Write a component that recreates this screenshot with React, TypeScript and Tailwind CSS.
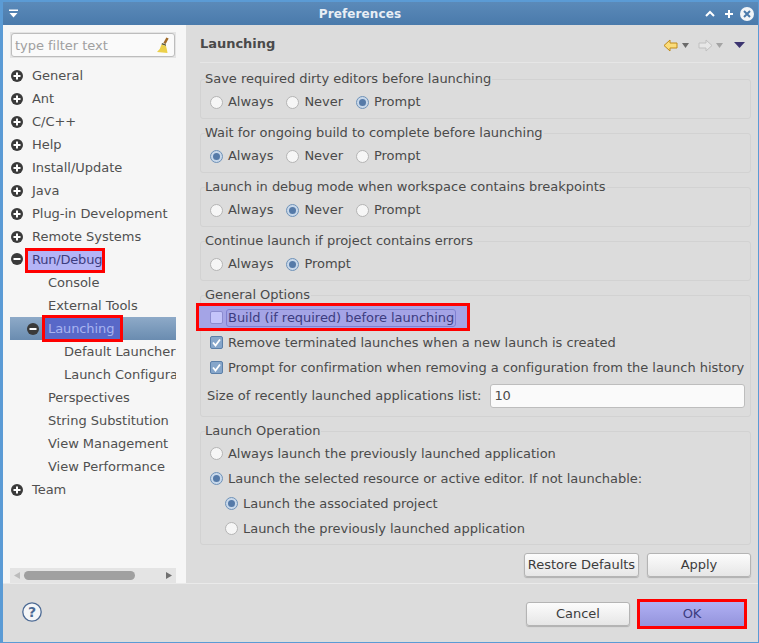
import React from 'react';

const font = { fontFamily: '"DejaVu Sans", sans-serif' };

const TreeIcon = ({ open, className }: { open?: boolean; className?: string }) => (
  <svg width="12" height="12" viewBox="0 0 12 12" className={`shrink-0 ${className ?? ''}`}>
    <circle cx="6" cy="6" r="6" fill="#3a3a3a" />
    <rect x="2.5" y="5" width="7" height="2" fill="#fff" />
    {!open && <rect x="5" y="2.5" width="2" height="7" fill="#fff" />}
  </svg>
);

const Radio = ({ checked, label }: { checked?: boolean; label: string }) => (
  <div className="flex items-center gap-[5px]">
    <span className={`w-[13px] h-[13px] rounded-full border flex items-center justify-center shrink-0 ${checked ? 'border-[#6f92b8] bg-[#c8d8ea]' : 'border-[#b4b4b4] bg-[#f6f6f6]'}`}>
      {checked && <span className="w-[7px] h-[7px] rounded-full bg-[#557aa8]" />}
    </span>
    <span>{label}</span>
  </div>
);

const Check = () => (
  <span className="w-[13px] h-[13px] rounded-[2px] border border-[#5b7fa8] bg-[#86a6ca] flex items-center justify-center shrink-0">
    <svg width="11" height="11" viewBox="0 0 11 11">
      <path d="M2 5.5 L4.5 8.5 L9 2.5" fill="none" stroke="#fff" strokeWidth="1.8" />
    </svg>
  </span>
);

const Group = ({ title, className, children }: { title: string; className: string; children: React.ReactNode }) => (
  <div className={`border border-[#d2d2d2] rounded-[3px] ${className}`}>
    <div className="h-[16px] -mt-[9px] ml-[4px] leading-[16px] text-[#4a4a4a]"><span className="bg-[#dcdcdc] pr-[1px]">{title}</span></div>
    {children}
  </div>
);

const RadioGroup = ({ title, mt, options }: { title: string; mt: string; options: [string, boolean?][] }) => (
  <Group title={title} className={`h-[40px] ${mt}`}>
    <div className="flex gap-[13px] pl-[9px] mt-[5px] h-[20px] items-center">
      {options.map(([l, c]) => <Radio key={l} label={l} checked={c} />)}
    </div>
  </Group>
);

const Btn = ({ label, className }: { label: string; className: string }) => (
  <button className={`h-[24px] rounded-[3px] border border-[#b4b4b4] bg-gradient-to-b from-[#fcfcfc] to-[#e6e6e6] text-[#3c3c3c] shadow-[0_1px_1px_rgba(0,0,0,0.2)] ${className}`}>{label}</button>
);

const topItems = ['General', 'Ant', 'C/C++', 'Help', 'Install/Update', 'Java', 'Plug-in Development', 'Remote Systems'];

const Row = ({ label, pad }: { label: string; pad: string }) => (
  <div className={`h-[23px] flex items-center whitespace-nowrap overflow-hidden ${pad}`}>{label}</div>
);

export default function App() {
  return (
    <div style={font} className="w-[759px] h-[643px] flex flex-col border-l-[3px] border-r border-b border-t-[2px] border-[#5b9bd5] bg-[#dcdcdc] text-[13px] tracking-[-0.03px] text-[#4a4a4a] overflow-hidden">
      {/* title bar */}
      <div className="h-[23px] shrink-0 bg-gradient-to-b from-[#5b8ab9] to-[#4a7aab] flex items-center justify-between pl-[5px] pr-[4px] text-white">
        <svg width="12" height="12" viewBox="0 0 12 12"><path d="M1 1.5 H10 V3 H1 Z M1.5 5 H9.5 L5.5 9.5 Z" fill="#fff" /></svg>
        <span className="font-bold text-[12px] text-[#e8eef5] tracking-[0.1px] mt-[1px] -ml-[5px]">Preferences</span>
        <div className="flex items-center">
          <svg width="10" height="10" viewBox="0 0 10 10" className="mr-[9px]"><path d="M1 7 L5 3 L9 7" fill="none" stroke="#fff" strokeWidth="2" /></svg>
          <svg width="10" height="10" viewBox="0 0 10 10" className="mr-[6px]"><path d="M5 1 V9 M1 5 H9" fill="none" stroke="#fff" strokeWidth="2" /></svg>
          <svg width="14" height="14" viewBox="0 0 14 14"><circle cx="7" cy="7" r="7" fill="#f2f5f8" /><path d="M4 4 L10 10 M10 4 L4 10" stroke="#4a7aab" strokeWidth="2" /></svg>
        </div>
      </div>

      <div className="flex h-[558px] shrink-0">
        {/* left tree */}
        <div className="w-[183px] shrink-0 bg-[#f6f6f6] flex flex-col pl-[7px] pr-[10px] pt-[7px]">
          <div className="h-[26px] shrink-0 bg-[#e4e4e4] p-[1px]">
            <div className="h-full bg-[#fafafa] border border-[#bdbdbd] rounded-[3px] flex items-center justify-between pl-[3px] pr-[4px] pt-[1px] text-[#a0a0a0]">
              <span>type filter text</span>
              <svg width="14" height="17" viewBox="0 0 14 17">
                <path d="M11.5 1 L8.5 6.5" stroke="#a06a28" strokeWidth="2.6" fill="none" />
                <path d="M6 6 L10 7.5 L10 9 L5.5 7.5 Z" fill="#5a5a40" />
                <path d="M5.5 7.5 L10 9 Q11 12.5 11.5 16 L1 15 Q4.5 12 5.5 7.5 Z" fill="#ecd04a" />
              </svg>
            </div>
          </div>
          <div className="flex-1 mt-[6px] text-[#505050] overflow-hidden">
            {topItems.map(label => (
              <div key={label} className="h-[23px] flex items-center gap-[9px] pl-[1px]"><TreeIcon /><span>{label}</span></div>
            ))}
            <div className="h-[23px] flex items-start pl-[1px]">
              <TreeIcon open className="mt-[5px]" />
              <span className="ml-[2px] h-[25px] w-[80px] shrink-0 pl-[4px] pb-[1px] flex items-center bg-[#b4b4f6] border-[3px] border-[#f00] text-[#3c3c80] tracking-[-0.2px] whitespace-nowrap">Run/Debug</span>
            </div>
            <Row label="Console" pad="pl-[38px]" />
            <Row label="External Tools" pad="pl-[38px]" />
            <div className="h-[23px] flex items-center pl-[17px] bg-gradient-to-b from-[#8eaac8] to-[#6a8cb0]">
              <TreeIcon open />
              <span className="ml-[3px] h-[27px] w-[81px] shrink-0 pl-[3px] flex items-center bg-[#5868c8] border-[3px] border-[#f00] text-[#a8b4f0] tracking-[-0.1px]">Launching</span>
            </div>
            <Row label="Default Launchers" pad="pl-[54px]" />
            <Row label="Launch Configurations" pad="pl-[54px]" />
            <Row label="Perspectives" pad="pl-[38px]" />
            <Row label="String Substitution" pad="pl-[38px]" />
            <Row label="View Management" pad="pl-[38px]" />
            <Row label="View Performance" pad="pl-[38px]" />
            <div className="h-[23px] flex items-center gap-[9px] pl-[1px]"><TreeIcon /><span>Team</span></div>
          </div>
          <div className="h-[15px] shrink-0 bg-[#e4e4e4] flex items-center justify-between px-[4px]">
            <svg width="6" height="7" viewBox="0 0 6 7"><path d="M6 0 V7 L0 3.5 Z" fill="#bcbcbc" /></svg>
            <div className="w-[111px] h-[9px] rounded-full bg-[#a0a0a0] -ml-[28px]" />
            <svg width="6" height="7" viewBox="0 0 6 7"><path d="M0 0 V7 L6 3.5 Z" fill="#707070" /></svg>
          </div>
        </div>

        {/* right page */}
        <div className="flex-1 pl-[14px] pr-[7px] flex flex-col">
          <div className="h-[38px] shrink-0 flex items-center justify-between border-b border-[#e6e6e6]">
            <span className="font-bold text-[#4a4a4a]">Launching</span>
            <div className="flex items-center mr-[6px] mt-[3px]">
              <svg width="16" height="13" viewBox="0 0 16 13"><path d="M7 1 L1 6.5 L7 12 V9 H14 V4 H7 Z" fill="#fbdc7a" stroke="#c08a18" /></svg>
              <svg width="9" height="6" viewBox="0 0 9 6" className="ml-[2px] mt-[2px]"><path d="M1 0 H8 L4.5 5 Z" fill="#6a6a6a" /></svg>
              <svg width="16" height="13" viewBox="0 0 16 13" className="ml-[7px]"><path d="M9 1 L15 6.5 L9 12 V9 H2 V4 H9 Z" fill="#e6e6e6" stroke="#c0c0c0" /></svg>
              <svg width="9" height="6" viewBox="0 0 9 6" className="ml-[2px] mt-[2px]"><path d="M1 0 H8 L4.5 5 Z" fill="#a4a4a4" /></svg>
              <svg width="11" height="6" viewBox="0 0 11 6" className="ml-[10px]"><path d="M0 0 H11 L5.5 6 Z" fill="#3c3570" /></svg>
            </div>
          </div>

          <RadioGroup title="Save required dirty editors before launching" mt="mt-[16px]" options={[['Always'], ['Never'], ['Prompt', true]]} />
          <RadioGroup title="Wait for ongoing build to complete before launching" mt="mt-[14px]" options={[['Always', true], ['Never'], ['Prompt']]} />
          <RadioGroup title="Launch in debug mode when workspace contains breakpoints" mt="mt-[14px]" options={[['Always'], ['Never', true], ['Prompt']]} />
          <RadioGroup title="Continue launch if project contains errors" mt="mt-[14px]" options={[['Always'], ['Prompt', true]]} />

          <Group title="General Options" className="h-[122px] mt-[14px]">
            <div className="-ml-[5px] w-[274px] h-[28px] border-[3px] border-[#f00] bg-[#a4a4e6] flex items-center pl-[11px] text-[#3c3c80]">
              <span className="w-[13px] h-[13px] rounded-[2px] border border-[#8c8cd0] bg-[#c4c4fa] shrink-0" />
              <span className="ml-[3px] mt-[1px] h-[18px] px-[1px] flex items-center border border-[#8080d0] rounded-[3px] whitespace-nowrap">Build (if required) before launching</span>
            </div>
            <div className="flex items-center gap-[5px] pl-[9px] mt-[3px] h-[17px]"><Check /><span>Remove terminated launches when a new launch is created</span></div>
            <div className="flex items-center gap-[5px] pl-[9px] mt-[8px] h-[17px] whitespace-nowrap"><Check /><span>Prompt for confirmation when removing a configuration from the launch history</span></div>
            <div className="flex items-center pl-[6px] pr-[5px] mt-[8px] h-[24px]">
              <span className="whitespace-nowrap tracking-normal">Size of recently launched applications list:</span>
              <div className="ml-[9px] flex-1 h-[24px] bg-[#fafafa] border border-[#bdbdbd] rounded-[3px] pl-[3px] flex items-center">10</div>
            </div>
          </Group>

          <Group title="Launch Operation" className="h-[114px] mt-[14px]">
            <div className="pl-[9px] mt-[2px] h-[25px] flex items-center"><Radio label="Always launch the previously launched application" /></div>
            <div className="pl-[9px] h-[25px] flex items-center"><Radio checked label="Launch the selected resource or active editor. If not launchable:" /></div>
            <div className="pl-[24px] h-[25px] flex items-center"><Radio checked label="Launch the associated project" /></div>
            <div className="pl-[24px] h-[25px] flex items-center"><Radio label="Launch the previously launched application" /></div>
          </Group>

          <div className="flex justify-end gap-[8px] mt-[8px]">
            <Btn label="Restore Defaults" className="w-[115px]" />
            <Btn label="Apply" className="w-[104px]" />
          </div>
        </div>
      </div>

      {/* footer */}
      <div className="flex-1 border-t border-[#eaeaea] flex items-center justify-between pl-[19px] pr-[11px]">
        <svg width="20" height="20" viewBox="0 0 20 20" className="-mt-[2px]">
          <circle cx="10" cy="10" r="9.2" fill="#f4f6f8" stroke="#4c6a94" strokeWidth="1.3" />
          <text x="10" y="15" textAnchor="middle" fontSize="14" fontWeight="bold" fill="#4c6a94">?</text>
        </svg>
        <div className="flex items-center gap-[7px] mt-[2px]">
          <Btn label="Cancel" className="w-[104px]" />
          <button className="w-[110px] h-[30px] border-[3px] border-[#f00] bg-gradient-to-b from-[#b0b0f4] to-[#9494dc] text-[#3c3c80]">OK</button>
        </div>
      </div>
    </div>
  );
}
